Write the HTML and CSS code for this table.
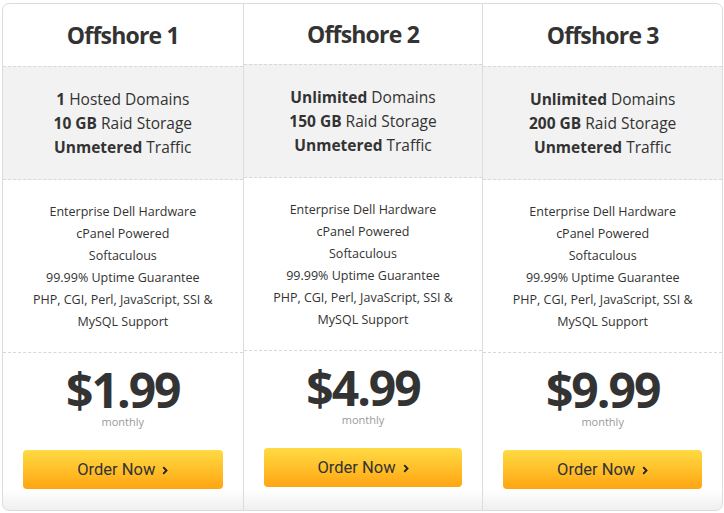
FILE: index.html
```html
<!DOCTYPE html>
<html>
<head>
<meta charset="utf-8">
<link rel="stylesheet" href="styles.css">
</head>
<body>
<div class="pricing">
  <div class="plan">
    <div class="plan-head"><h2 class="plan-title">Offshore 1</h2></div>
    <div class="plan-band">
      <div><b>1</b> Hosted Domains</div>
      <div><b>10 GB</b> Raid Storage</div>
      <div><b>Unmetered</b> Traffic</div>
    </div>
    <ul class="plan-features">
      <li>Enterprise Dell Hardware</li>
      <li>cPanel Powered</li>
      <li>Softaculous</li>
      <li>99.99% Uptime Guarantee</li>
      <li>PHP, CGI, Perl, JavaScript, SSI &amp;<br>MySQL Support</li>
    </ul>
    <div class="plan-price">
      <div class="price">$1.99</div>
      <div class="period">monthly</div>
      <a class="order-btn" href="#">Order Now <svg class="chev" width="6" height="9" viewBox="0 0 6 9"><path d="M1.2 1.2 L4.5 4.5 L1.2 7.8" fill="none" stroke="#222" stroke-width="1.9"/></svg></a>
    </div>
  </div>
  <div class="plan plan-featured">
    <div class="plan-head"><h2 class="plan-title">Offshore 2</h2></div>
    <div class="plan-band">
      <div><b>Unlimited</b> Domains</div>
      <div><b>150 GB</b> Raid Storage</div>
      <div><b>Unmetered</b> Traffic</div>
    </div>
    <ul class="plan-features">
      <li>Enterprise Dell Hardware</li>
      <li>cPanel Powered</li>
      <li>Softaculous</li>
      <li>99.99% Uptime Guarantee</li>
      <li>PHP, CGI, Perl, JavaScript, SSI &amp;<br>MySQL Support</li>
    </ul>
    <div class="plan-price">
      <div class="price">$4.99</div>
      <div class="period">monthly</div>
      <a class="order-btn" href="#">Order Now <svg class="chev" width="6" height="9" viewBox="0 0 6 9"><path d="M1.2 1.2 L4.5 4.5 L1.2 7.8" fill="none" stroke="#222" stroke-width="1.9"/></svg></a>
    </div>
  </div>
  <div class="plan">
    <div class="plan-head"><h2 class="plan-title">Offshore 3</h2></div>
    <div class="plan-band">
      <div><b>Unlimited</b> Domains</div>
      <div><b>200 GB</b> Raid Storage</div>
      <div><b>Unmetered</b> Traffic</div>
    </div>
    <ul class="plan-features">
      <li>Enterprise Dell Hardware</li>
      <li>cPanel Powered</li>
      <li>Softaculous</li>
      <li>99.99% Uptime Guarantee</li>
      <li>PHP, CGI, Perl, JavaScript, SSI &amp;<br>MySQL Support</li>
    </ul>
    <div class="plan-price">
      <div class="price">$9.99</div>
      <div class="period">monthly</div>
      <a class="order-btn" href="#">Order Now <svg class="chev" width="6" height="9" viewBox="0 0 6 9"><path d="M1.2 1.2 L4.5 4.5 L1.2 7.8" fill="none" stroke="#222" stroke-width="1.9"/></svg></a>
    </div>
  </div>
</div>
</body>
</html>
```

FILE: styles.css
```css
* { box-sizing: border-box; }

body {
  margin: 0;
  background: #fff;
  font-family: "Open Sans", "DejaVu Sans", sans-serif;
  color: #333;
}

.pricing {
  margin: 3px 0 0 2px;
  width: 721px;
  height: 508px;
  border: 1px solid #dcdcdc;
  border-radius: 7px;
  display: grid;
  grid-template-columns: 1fr 1fr 1fr;
  background: linear-gradient(to bottom, #fff calc(100% - 20px), #efefef);
  overflow: hidden;
}

.plan {
  display: flex;
  flex-direction: column;
  text-align: center;
  border-left: 1px solid #dcdcdc;
}
.plan:first-child { border-left: 0; }

.plan-head {
  height: 62px;
  display: flex;
  align-items: center;
  justify-content: center;
}
.plan-featured .plan-head { height: 60px; padding-bottom: 1px; }

.plan-title {
  margin: 0;
  font-size: 23px;
  font-weight: 700;
  letter-spacing: -0.8px;
  color: #333;
}

.plan-band {
  background: #f2f2f2;
  border-top: 1px dashed #d8d8d8;
  border-bottom: 1px dashed #d8d8d8;
  padding: 20px 0;
  font-size: 15.5px;
  line-height: 24px;
  color: #333;
}
.plan-band b { font-weight: 700; }

.plan-features {
  list-style: none;
  margin: 0;
  padding: 21px 0 19px;
  font-size: 12.5px;
  line-height: 22px;
  color: #333;
  border-bottom: 1px dashed #d8d8d8;
}

.plan-price {
  padding: 12px 20px 0;
  display: flex;
  flex-direction: column;
  align-items: stretch;
}

.price {
  font-size: 48px;
  line-height: 50px;
  font-weight: 700;
  letter-spacing: -2px;
  color: #333;
}

.period {
  font-size: 11px;
  line-height: 14px;
  color: #9a9a9a;
}

.order-btn {
  margin-top: 21px;
  height: 39px;
  border-radius: 4px;
  background: linear-gradient(to bottom, #ffdb43, #ffa512);
  display: flex;
  align-items: center;
  justify-content: center;
  gap: 7px;
  font-family: Roboto, "Open Sans", sans-serif;
  font-size: 16.5px;
  color: #333;
  text-decoration: none;
}

.chev { display: block; margin-top: 1px; }
```
